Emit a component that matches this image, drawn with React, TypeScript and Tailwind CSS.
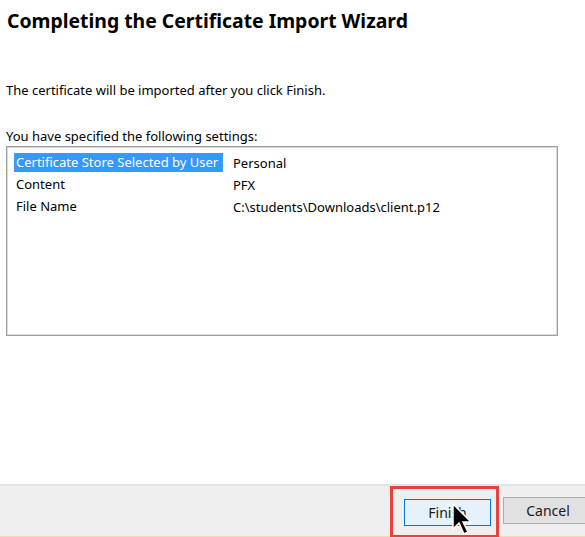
import React from "react";

const rows = [
  { label: "Certificate Store Selected by User", value: "Personal", selected: true },
  { label: "Content", value: "PFX" },
  { label: "File Name", value: "C:\\students\\Downloads\\client.p12" },
];

function Cursor() {
  return (
    <svg width="22" height="34" viewBox="0 0 22 34" className="absolute left-[452px] top-[503px]">
      <path d="M1 1 L1 26 L7 20 L12 31 L16 29 L11 19 L19 19 Z" fill="#000" stroke="#fff" strokeWidth="1.5" />
    </svg>
  );
}

export default function App() {
  return (
    <div
      className="relative w-[585px] h-[537px] bg-white overflow-hidden flex flex-col text-[#000]"
      style={{ fontFamily: '"Noto Sans", "Open Sans", sans-serif' }}
    >
      <div className="flex-1 flex flex-col px-[6px]">
        <h1 className="pt-[7px] pl-[1px] text-[19.4px] font-bold leading-[28px] text-black">
          Completing the Certificate Import Wizard
        </h1>
        <p className="mt-[47px] text-[13px] leading-[16px]">
          The certificate will be imported after you click Finish.
        </p>
        <p className="mt-[30px] text-[13px] leading-[16px]">You have specified the following settings:</p>
        <div className="mt-[2px] w-[552px] h-[190px] border border-[#9ea1a6] shadow-[inset_0_0_0_1px_#d9d9d9] bg-white pt-[5px] pl-[7px]">
          {rows.map((r) => (
            <div key={r.label} className="flex h-[22px] items-center text-[13px]">
              <div className="w-[219px] shrink-0">
                <span
                  className={
                    r.selected
                      ? "inline-block bg-[#3399ff] text-white pl-[1px] pr-[4px] leading-[17px] border border-dotted border-[#c08040]"
                      : "inline-block px-[2px] leading-[17px]"
                  }
                >
                  {r.label}
                </span>
              </div>
              <span className="leading-[17px]">{r.value}</span>
            </div>
          ))}
        </div>
      </div>
      <div className="h-[53px] bg-[#efefef] border-t-2 border-[#e3e3e3] border-b border-b-[#f0dcb0] flex items-start">
        <div className="shrink-0 ml-[390px] w-[109px] h-[52px] border-[3px] border-[#e8433b] flex pl-[11px] pt-[10px]">
          <button className="w-[87px] h-[27px] bg-[#e5f1fb] border border-[#0078d7] text-[14px] text-[#1a1a1a]">
            Finish
          </button>
        </div>
        <button className="shrink-0 ml-[4px] mt-[11px] w-[90px] h-[27px] bg-[#e1e1e1] border border-[#adadad] text-[14px] text-[#1a1a1a]">
          Cancel
        </button>
      </div>
      <Cursor />
    </div>
  );
}
